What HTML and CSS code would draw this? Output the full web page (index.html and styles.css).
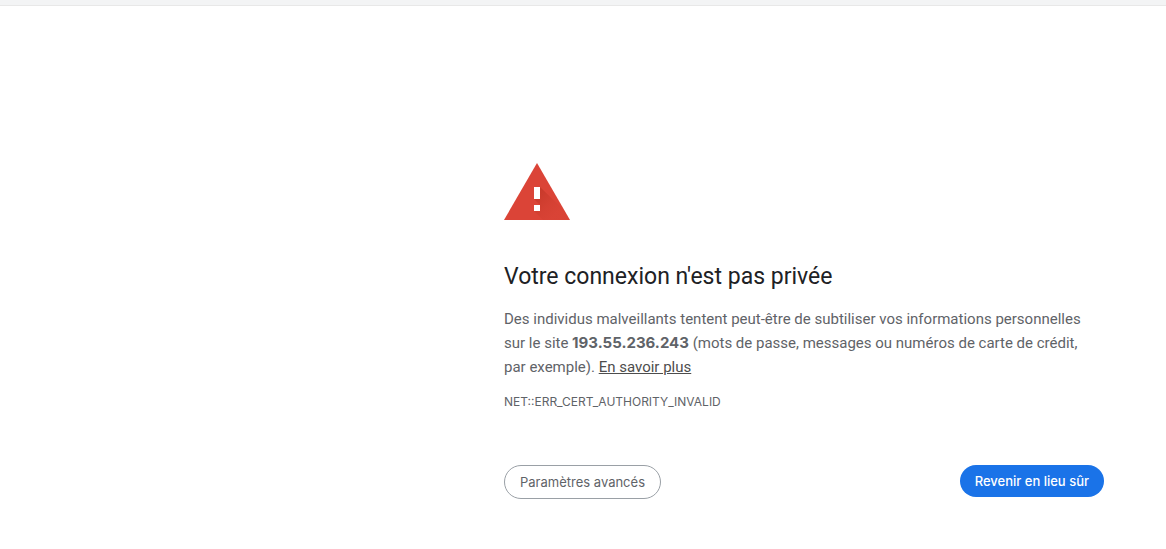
FILE: index.html
```html
<!DOCTYPE html>
<html lang="fr">
<head>
<meta charset="utf-8">
<title>Erreur liée à la confidentialité</title>
<link rel="stylesheet" href="styles.css">
</head>
<body>
<div class="topbar"></div>
<main class="warning">
  <svg class="icon" viewBox="0 0 66 57" aria-hidden="true">
    <defs>
      <linearGradient id="shade" gradientUnits="userSpaceOnUse" x1="32" y1="30" x2="52" y2="50">
        <stop offset="0" stop-color="#a52714" stop-opacity=".36"/>
        <stop offset=".6" stop-color="#a52714" stop-opacity=".12"/>
        <stop offset="1" stop-color="#a52714" stop-opacity=".04"/>
      </linearGradient>
    </defs>
    <path d="M33 0 66 57H0z" fill="#db4437"/>
    <path d="M36 24 60 47 66 57H39L30 48H36V42L30 36H36z" fill="url(#shade)"/>
    <path d="M30 24h6v12h-6zM30 42h6v6h-6z" fill="#fff"/>
  </svg>
  <h1 class="title">Votre connexion n'est pas privée</h1>
  <p class="message">Des individus malveillants tentent peut-être de subtiliser vos informations personnelles sur le site <strong class="host">193.55.236.243</strong> (mots de passe, messages ou numéros de carte de crédit,<br>par exemple). <a class="link" href="#">En savoir plus</a></p>
  <p class="code">NET::ERR_CERT_AUTHORITY_INVALID</p>
  <div class="actions">
    <button class="button" type="button">Paramètres avancés</button>
    <button class="button primary" type="button">Revenir en lieu sûr</button>
  </div>
</main>
</body>
</html>
```
FILE: styles.css
```css
body {
  margin: 0;
  background: #fff;
  color: #5f6368;
  font-family: Inter, "Liberation Sans", sans-serif;
}
.topbar {
  height: 5px;
  background: #f3f4f5;
  border-bottom: 1px solid #e8e8e8;
}
.warning {
  max-width: 600px;
  margin: 157px 62px 0 auto;
}
.icon {
  display: block;
  width: 66px;
  height: 57px;
}
.title {
  margin: 41px 0 14px;
  color: #202124;
  font: 400 23px/32px Roboto, "Liberation Sans", sans-serif;
}
.message {
  margin: 0;
  font: 400 15px/24px Roboto, "Liberation Sans", sans-serif;
}
.host {
  font-family: Inter, "Liberation Sans", sans-serif;
}
.link {
  color: #4d4d4d;
}
.code {
  margin: 14px 0 0;
  font-size: 12px;
  line-height: 18px;
}
.actions {
  display: flex;
  justify-content: space-between;
  align-items: flex-start;
  margin-top: 54px;
}
.button {
  height: 34px;
  padding: 0 15px;
  border: 1px solid #9aa0a6;
  border-radius: 17px;
  background: #fff;
  color: #5f6368;
  font: 400 13px/20px Inter, "Liberation Sans", sans-serif;
}
.primary {
  height: 32px;
  border: 0;
  background: #1a73e8;
  color: #fff;
  font-weight: 500;
}
```
